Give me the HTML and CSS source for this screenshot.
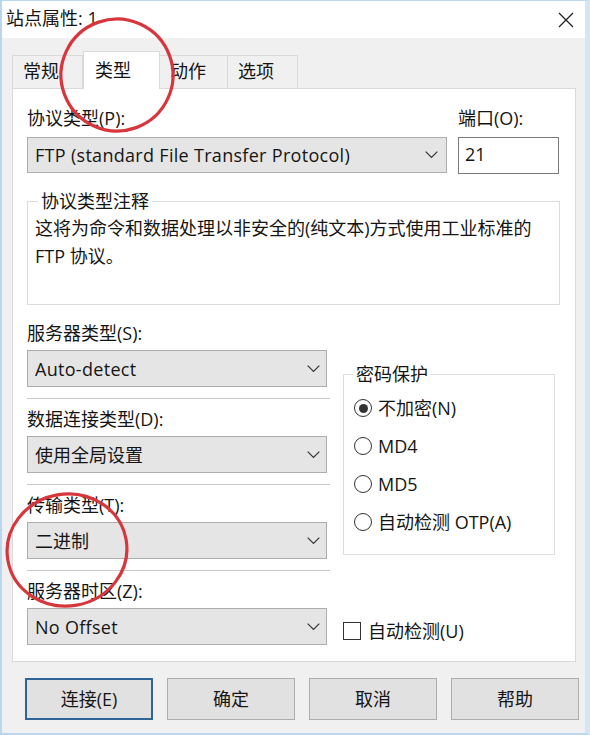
FILE: index.html
```html
<!DOCTYPE html>
<html lang="zh-CN">
<head>
<meta charset="utf-8">
<title>站点属性: 1</title>
<link rel="stylesheet" href="styles.css">
</head>
<body>
<div class="window">
  <div class="titlebar">
    <span class="title">站点属性: 1</span>
    <svg class="close" width="16" height="16" viewBox="0 0 16 16"><path d="M1 1 L15 15 M15 1 L1 15" stroke="#222" stroke-width="1.3" fill="none"/></svg>
  </div>
  <div class="body">
    <div class="tabs">
      <div class="tab t1">常规</div>
      <div class="tab t2 active">类型</div>
      <div class="tab t3">动作</div>
      <div class="tab t4">选项</div>
    </div>
    <div class="panel">
      <div class="row-top">
        <div class="col-proto">
          <div class="label">协议类型(P):</div>
          <div class="combo">
            <span class="latin">FTP (standard File Transfer Protocol)</span>
            <svg class="chev" width="13" height="8" viewBox="0 0 13 8"><polyline points="0.7,0.7 6.5,6.5 12.3,0.7" fill="none" stroke="#333" stroke-width="1.2"/></svg>
          </div>
        </div>
        <div class="col-port">
          <div class="label">端口(O):</div>
          <div class="input">21</div>
        </div>
      </div>
      <fieldset class="group note">
        <legend>协议类型注释</legend>
        <p>这将为命令和数据处理以非安全的(纯文本)方式使用工业标准的<br>FTP 协议。</p>
      </fieldset>
      <div class="row-bottom">
        <div class="col-left">
          <div class="field">
            <div class="label">服务器类型(S):</div>
            <div class="combo small"><span class="latin">Auto-detect</span><svg class="chev" width="13" height="8" viewBox="0 0 13 8"><polyline points="0.7,0.7 6.5,6.5 12.3,0.7" fill="none" stroke="#333" stroke-width="1.2"/></svg></div>
          </div>
          <div class="sep"></div>
          <div class="field">
            <div class="label">数据连接类型(D):</div>
            <div class="combo small"><span>使用全局设置</span><svg class="chev" width="13" height="8" viewBox="0 0 13 8"><polyline points="0.7,0.7 6.5,6.5 12.3,0.7" fill="none" stroke="#333" stroke-width="1.2"/></svg></div>
          </div>
          <div class="sep"></div>
          <div class="field">
            <div class="label">传输类型(T):</div>
            <div class="combo small"><span>二进制</span><svg class="chev" width="13" height="8" viewBox="0 0 13 8"><polyline points="0.7,0.7 6.5,6.5 12.3,0.7" fill="none" stroke="#333" stroke-width="1.2"/></svg></div>
          </div>
          <div class="sep"></div>
          <div class="field">
            <div class="label">服务器时区(Z):</div>
            <div class="combo small"><span class="latin">No Offset</span><svg class="chev" width="13" height="8" viewBox="0 0 13 8"><polyline points="0.7,0.7 6.5,6.5 12.3,0.7" fill="none" stroke="#333" stroke-width="1.2"/></svg></div>
          </div>
        </div>
        <div class="col-right">
          <fieldset class="group pw">
            <legend>密码保护</legend>
            <div class="radios">
              <div class="radio-row"><span class="radio checked"></span><span>不加密(N)</span></div>
              <div class="radio-row"><span class="radio"></span><span>MD4</span></div>
              <div class="radio-row"><span class="radio"></span><span>MD5</span></div>
              <div class="radio-row"><span class="radio"></span><span>自动检测 OTP(A)</span></div>
            </div>
          </fieldset>
          <div class="check-row"><span class="checkbox"></span><span>自动检测(U)</span></div>
        </div>
      </div>
    </div>
    <div class="buttons">
      <div class="btn default">连接(E)</div>
      <div class="btn">确定</div>
      <div class="btn">取消</div>
      <div class="btn">帮助</div>
    </div>
  </div>
  <svg class="annot" width="590" height="735" viewBox="0 0 590 735">
    <ellipse cx="117" cy="75" rx="56" ry="56" transform="rotate(-20 117 75)" fill="none" stroke="#d8363d" stroke-width="3.2"/>
    <ellipse cx="67" cy="550" rx="60" ry="56" transform="rotate(-10 67 550)" fill="none" stroke="#d8363d" stroke-width="3.2"/>
  </svg>
</div>
</body>
</html>
```
FILE: styles.css
```css
* { box-sizing: border-box; }
html, body { margin: 0; padding: 0; }
body {
  width: 590px;
  height: 735px;
  overflow: hidden;
  background: #ffffff;
  font-family: "Open Sans", "Noto Sans CJK SC", sans-serif;
  font-size: 18px;
  color: #151515;
}
.window {
  position: relative;
  width: 590px;
  height: 735px;
  background: #f0f0f0;
  border-left: 2px solid #b9d7f0;
  border-top: 1px solid #b9d7f0;
  border-right: 5px solid #d3e6f6;
  border-bottom: 2px solid #b9d7f0;
  display: flex;
  flex-direction: column;
}
.titlebar {
  height: 37px;
  background: #ffffff;
  display: flex;
  align-items: center;
  padding: 0 11px 4px 4px;
}
.title { line-height: 24px; }
.close { margin-left: auto; margin-top: 4px; }
.body {
  padding: 13px 9px 0 10px;
  display: flex;
  flex-direction: column;
}
.tabs {
  display: flex;
  align-items: flex-end;
  height: 38px;
  margin-bottom: -1px;
  position: relative;
  z-index: 1;
}
.tab {
  height: 33px;
  margin-bottom: 1px;
  background: #f0f0f0;
  border: 1px solid #d9d9d9;
  border-bottom: none;
  padding-left: 10px;
  line-height: 31px;
}
.t1 { width: 71px; }
.t2 { width: 77px; }
.t3 { width: 68px; border-left: none; }
.t4 { width: 70px; border-left: none; }
.tab.active {
  height: 38px;
  margin-bottom: 0;
  background: #ffffff;
  padding-left: 11px;
  line-height: 36px;
}
.panel {
  background: #ffffff;
  border: 1px solid #d9d9d9;
  height: 574px;
  padding: 17px 15px 0 14px;
}
.label { line-height: 24px; }
.latin { letter-spacing: 0.3px; }
.row-top { display: flex; gap: 11px; }
.col-proto { width: 420px; }
.col-port { width: 101px; }
.col-proto .label, .col-port .label { margin-bottom: 7px; }
.combo {
  height: 36px;
  background: #e5e5e5;
  border: 1px solid #adadad;
  display: flex;
  align-items: center;
  justify-content: space-between;
  padding: 0 8px 0 7px;
  line-height: 24px;
}
.combo.small { height: 37px; width: 300px; margin-top: 5px; padding-right: 6px; }
.input {
  height: 37px;
  background: #ffffff;
  border: 1px solid #7a7a7a;
  padding-left: 6px;
  line-height: 33px;
}
.group {
  margin: 0;
  border: 1px solid #dcdcdc;
  min-width: 0;
}
.group legend {
  line-height: 24px;
  padding: 0 3px;
}
.note {
  margin-top: 15px;
  width: 533px;
  height: 116px;
  padding: 0 7px;
}
.note legend { margin-left: 3px; }
.note p {
  margin: 1px 0 0;
  line-height: 28px;
}
.row-bottom {
  display: flex;
  gap: 13px;
  margin-top: 16px;
}
.col-left { width: 303px; }
.sep {
  height: 1px;
  background: #c8c8c8;
  margin: 11px 0 8px;
}
.col-right { width: 212px; }
.pw {
  margin-top: 41px;
  padding: 0 10px 13px;
}
.pw legend { margin-left: -1px; }
.radios { margin-top: 3px; }
.radio-row {
  display: flex;
  align-items: center;
  gap: 6px;
  height: 38px;
  line-height: 24px;
}
.radio {
  width: 18px;
  height: 18px;
  border: 1px solid #333;
  border-radius: 50%;
  background: #fff;
  display: flex;
  align-items: center;
  justify-content: center;
  flex: none;
}
.radio.checked::after {
  content: "";
  width: 9px;
  height: 9px;
  border-radius: 50%;
  background: #333;
}
.check-row {
  display: flex;
  align-items: center;
  gap: 7px;
  margin-top: 64px;
  line-height: 24px;
}
.checkbox {
  width: 18px;
  height: 18px;
  border: 1px solid #333;
  background: #fff;
  flex: none;
}
.buttons {
  display: flex;
  gap: 14px;
  margin-top: 16px;
  padding-left: 13px;
}
.btn {
  flex: none;
  width: 128px;
  height: 42px;
  background: #e1e1e1;
  border: 1px solid #adadad;
  display: flex;
  align-items: center;
  justify-content: center;
  line-height: 24px;
}
.btn.default { border: 2px solid #2f6596; }
.annot {
  position: absolute;
  left: -2px;
  top: -1px;
  pointer-events: none;
  z-index: 5;
}
```
